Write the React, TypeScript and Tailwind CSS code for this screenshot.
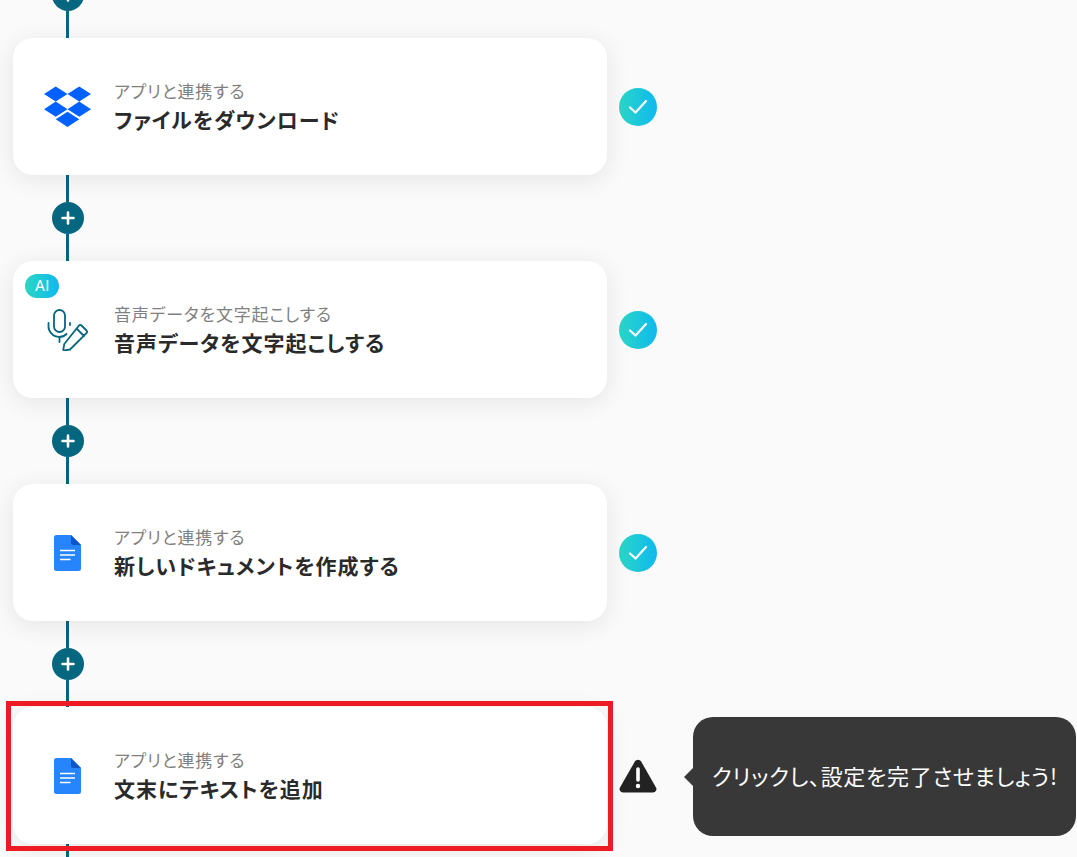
import type { ReactNode } from "react";

function PlusNode() {
  return (
    <div className="flex h-8 w-8 items-center justify-center rounded-full bg-[#04667f]">
      <svg width="14" height="14" viewBox="0 0 14 14">
        <path d="M7 1.5v11M1.5 7h11" stroke="#fff" strokeWidth="2.6" strokeLinecap="round" />
      </svg>
    </div>
  );
}

function Line({ className }: { className: string }) {
  return <div className={`ml-[14px] w-[3px] bg-[#04667f] ${className}`} />;
}

function Connector() {
  return (
    <div className="ml-[39px] flex w-8 flex-col">
      <Line className="h-[27px]" />
      <PlusNode />
      <Line className="h-[27px]" />
    </div>
  );
}

function DropboxIcon() {
  return (
    <svg width="47" height="44" viewBox="0 0 48 44" fill="#0061ff">
      <path d="M12 1 0 8.800l12 7.700 12-7.700zM36 1 24 8.800l12 7.700 12-7.700zM0 24.200 12 32l12-7.800-12-7.700zM36 16.500l-12 7.700L36 32l12-7.800zM12 34.600l12 7.900 12-7.900-12-7.700z" />
    </svg>
  );
}

function DocsIcon() {
  return (
    <svg width="27" height="36" viewBox="0 0 27 36">
      <path d="M2.500 0H17l10 10v23.500a2.500 2.500 0 0 1-2.500 2.500h-22A2.500 2.500 0 0 1 0 33.500v-31A2.500 2.500 0 0 1 2.500 0z" fill="#2684fc" />
      <path d="M17 0l10 10h-7.500A2.500 2.500 0 0 1 17 7.500z" fill="#0b57c9" />
      <path d="M6 15.500h15M6 20h15M6 24.500h10.500" stroke="#fff" strokeWidth="1.700" />
    </svg>
  );
}

function VoiceIcon() {
  return (
    <svg className="ml-[2px]" width="42" height="42" viewBox="0 0 42 42" fill="none" stroke="#04667f" strokeWidth="1.800" strokeLinecap="round" strokeLinejoin="round">
      <rect x="7" y="1" width="11" height="22" rx="5.500" />
      <path d="M1.500 14v2a11 11 0 0 0 11 12c3 0 5-1 7-3M23 14v2M12.500 28v5" />
      <path d="M32 16.500a1.800 1.800 0 0 1 2.500 0l5 5a1.800 1.800 0 0 1 0 2.500L23 40.500l-5.500 1a1 1 0 0 1-1.200-1.200l1-5.300zM29.500 19.500l7.500 7.500" />
    </svg>
  );
}

function CheckBadge() {
  return (
    <div className="flex h-[38px] w-[38px] items-center justify-center rounded-full bg-gradient-to-r from-[#2cd6c4] to-[#10b8ee]">
      <svg width="20" height="16" viewBox="0 0 20 16" fill="none">
        <path d="M2 8.500l5.500 5L18 2" stroke="#fff" strokeWidth="2.200" strokeLinecap="round" strokeLinejoin="round" />
      </svg>
    </div>
  );
}

function WarningBadge() {
  return (
    <div className="flex h-[38px] w-[38px] items-center justify-center">
      <svg width="38" height="34" viewBox="0 0 38 34">
        <path d="M15.800 2.600a3.700 3.700 0 0 1 6.400 0l14.800 25.800a3.500 3.500 0 0 1-3 5.200H4a3.500 3.500 0 0 1-3-5.200z" fill="#222" />
        <path d="M19 10v11" stroke="#fff" strokeWidth="3.600" strokeLinecap="round" />
        <circle cx="19" cy="27" r="2.200" fill="#fff" />
      </svg>
    </div>
  );
}

function Card({ icon, label, title, ai }: { icon: ReactNode; label: string; title: string; ai?: boolean }) {
  return (
    <div className="relative flex h-[137px] w-[594px] items-center rounded-[20px] bg-white shadow-[0_4px_24px_rgba(0,0,0,0.09)]">
      {ai && (
        <span className="absolute left-3 top-[13px] flex h-6 w-[34px] items-center justify-center rounded-full bg-gradient-to-r from-[#2cd6c4] to-[#10b8ee] font-['Inter',sans-serif] text-[15px] text-white">
          AI
        </span>
      )}
      <div className="flex w-[101px] items-center justify-center pl-[7px]">{icon}</div>
      <div className="flex flex-col pb-[2px]">
        <span className="text-[17px] leading-[26px] tracking-[0.8px] text-[#808080] [font-feature-settings:'palt']">{label}</span>
        <span className="text-[21px] font-bold leading-[30px] tracking-[1px] text-[#2a2a2a] [font-feature-settings:'palt']">{title}</span>
      </div>
    </div>
  );
}

const steps = [
  { icon: <DropboxIcon />, label: "アプリと連携する", title: "ファイルをダウンロード" },
  { icon: <VoiceIcon />, label: "音声データを文字起こしする", title: "音声データを文字起こしする", ai: true },
  { icon: <DocsIcon />, label: "アプリと連携する", title: "新しいドキュメントを作成する" },
];

export default function App() {
  return (
    <div className="h-[857px] w-[1077px] overflow-hidden bg-[#fafafa] font-['Noto_Sans_CJK_JP','Noto_Sans',sans-serif]">
      <div className="-mt-[21px] flex flex-col pl-[13px]">
        <div className="ml-[39px] flex w-8 flex-col">
          <PlusNode />
          <Line className="h-[27px]" />
        </div>
        {steps.map((step) => (
          <div key={step.title}>
            <div className="flex items-center gap-3">
              <Card icon={step.icon} label={step.label} title={step.title} ai={step.ai} />
              <CheckBadge />
            </div>
            <Connector />
          </div>
        ))}
        <div className="relative flex items-center gap-3">
          <Card icon={<DocsIcon />} label="アプリと連携する" title="文末にテキストを追加" />
          <WarningBadge />
          {/* red highlight around the unfinished step */}
          <div className="absolute -left-[7px] -top-[6px] h-[150px] w-[607px] border-[5px] border-[#ed1c24]" />
          <div className="absolute left-[680px] top-[10px] flex h-[119px] w-[383px] items-center rounded-[20px] bg-[#383838] pb-[2px] pl-[19px] text-[22px] tracking-[0.7px] text-white [font-feature-settings:'palt']">
            <span className="absolute -left-[9px] top-[51px] h-0 w-0 border-y-[9px] border-r-[9px] border-y-transparent border-r-[#383838]" />
            クリックし、設定を完了させましょう!
          </div>
        </div>
        <div className="ml-[39px] flex w-8 flex-col">
          <Line className="h-[27px]" />
        </div>
      </div>
    </div>
  );
}
